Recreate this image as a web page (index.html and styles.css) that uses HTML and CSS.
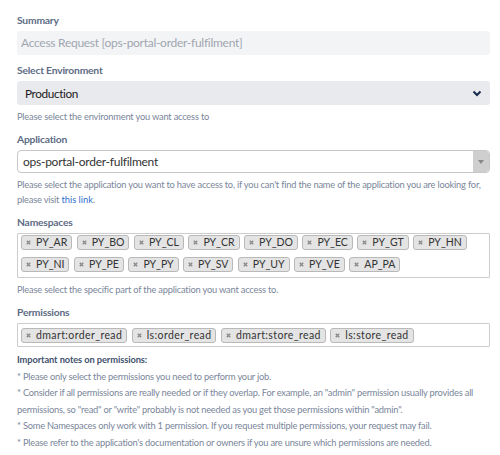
FILE: index.html
```html
<!DOCTYPE html>
<html lang="en">
<head>
<meta charset="utf-8">
<title>Access Request</title>
<link rel="stylesheet" href="styles.css">
</head>
<body>
<form class="form">
  <div class="field">
    <label class="label">Summary</label>
    <div class="input input-disabled">Access Request [ops-portal-order-fulfilment]</div>
  </div>

  <div class="field">
    <label class="label">Select Environment</label>
    <div class="select">
      <span>Production</span>
      <svg class="chevron" width="10" height="7" viewBox="0 0 10 7"><path d="M1.5 1.5 L5 5 L8.5 1.5" fill="none" stroke="#172b4d" stroke-width="2"/></svg>
    </div>
    <p class="help">Please select the environment you want access to</p>
  </div>

  <div class="field">
    <label class="label">Application</label>
    <div class="combo">
      <span class="combo-text">ops-portal-order-fulfilment</span>
      <span class="combo-arrow"><svg width="6" height="4" viewBox="0 0 6 4"><path d="M0 0 H6 L3 4 Z" fill="#888"/></svg></span>
    </div>
    <p class="help">Please select the application you want to have access to, if you can't find the name of the application you are looking for, please&nbsp;visit&nbsp;<a href="#" class="link">this link</a>.</p>
  </div>

  <div class="field">
    <label class="label">Namespaces</label>
    <div class="multi multi-namespaces">
      <span class="tag"><svg class="tag-x" viewBox="0 0 5 5"><path d="M0.8 0.8 L4.2 4.2 M4.2 0.8 L0.8 4.2"/></svg>PY_AR</span>
      <span class="tag"><svg class="tag-x" viewBox="0 0 5 5"><path d="M0.8 0.8 L4.2 4.2 M4.2 0.8 L0.8 4.2"/></svg>PY_BO</span>
      <span class="tag"><svg class="tag-x" viewBox="0 0 5 5"><path d="M0.8 0.8 L4.2 4.2 M4.2 0.8 L0.8 4.2"/></svg>PY_CL</span>
      <span class="tag"><svg class="tag-x" viewBox="0 0 5 5"><path d="M0.8 0.8 L4.2 4.2 M4.2 0.8 L0.8 4.2"/></svg>PY_CR</span>
      <span class="tag"><svg class="tag-x" viewBox="0 0 5 5"><path d="M0.8 0.8 L4.2 4.2 M4.2 0.8 L0.8 4.2"/></svg>PY_DO</span>
      <span class="tag"><svg class="tag-x" viewBox="0 0 5 5"><path d="M0.8 0.8 L4.2 4.2 M4.2 0.8 L0.8 4.2"/></svg>PY_EC</span>
      <span class="tag"><svg class="tag-x" viewBox="0 0 5 5"><path d="M0.8 0.8 L4.2 4.2 M4.2 0.8 L0.8 4.2"/></svg>PY_GT</span>
      <span class="tag"><svg class="tag-x" viewBox="0 0 5 5"><path d="M0.8 0.8 L4.2 4.2 M4.2 0.8 L0.8 4.2"/></svg>PY_HN</span>
      <span class="tag"><svg class="tag-x" viewBox="0 0 5 5"><path d="M0.8 0.8 L4.2 4.2 M4.2 0.8 L0.8 4.2"/></svg>PY_NI</span>
      <span class="tag"><svg class="tag-x" viewBox="0 0 5 5"><path d="M0.8 0.8 L4.2 4.2 M4.2 0.8 L0.8 4.2"/></svg>PY_PE</span>
      <span class="tag"><svg class="tag-x" viewBox="0 0 5 5"><path d="M0.8 0.8 L4.2 4.2 M4.2 0.8 L0.8 4.2"/></svg>PY_PY</span>
      <span class="tag"><svg class="tag-x" viewBox="0 0 5 5"><path d="M0.8 0.8 L4.2 4.2 M4.2 0.8 L0.8 4.2"/></svg>PY_SV</span>
      <span class="tag"><svg class="tag-x" viewBox="0 0 5 5"><path d="M0.8 0.8 L4.2 4.2 M4.2 0.8 L0.8 4.2"/></svg>PY_UY</span>
      <span class="tag"><svg class="tag-x" viewBox="0 0 5 5"><path d="M0.8 0.8 L4.2 4.2 M4.2 0.8 L0.8 4.2"/></svg>PY_VE</span>
      <span class="tag"><svg class="tag-x" viewBox="0 0 5 5"><path d="M0.8 0.8 L4.2 4.2 M4.2 0.8 L0.8 4.2"/></svg>AP_PA</span>
    </div>
    <p class="help">Please select the specific part of the application you want access to.</p>
  </div>

  <div class="field">
    <label class="label">Permissions</label>
    <div class="multi multi-permissions">
      <span class="tag"><svg class="tag-x" viewBox="0 0 5 5"><path d="M0.8 0.8 L4.2 4.2 M4.2 0.8 L0.8 4.2"/></svg>dmart:order_read</span>
      <span class="tag"><svg class="tag-x" viewBox="0 0 5 5"><path d="M0.8 0.8 L4.2 4.2 M4.2 0.8 L0.8 4.2"/></svg>ls:order_read</span>
      <span class="tag"><svg class="tag-x" viewBox="0 0 5 5"><path d="M0.8 0.8 L4.2 4.2 M4.2 0.8 L0.8 4.2"/></svg>dmart:store_read</span>
      <span class="tag"><svg class="tag-x" viewBox="0 0 5 5"><path d="M0.8 0.8 L4.2 4.2 M4.2 0.8 L0.8 4.2"/></svg>ls:store_read</span>
    </div>
  </div>

  <div class="notes">
    <p class="notes-title">Important notes on permissions:</p>
    <p>* Please only select the permissions you need to perform your job.</p>
    <p>* Consider if all permissions are really needed or if they overlap. For example, an "admin" permission usually provides all permissions, so "read" or "write" probably is not needed as you get those permissions within "admin".</p>
    <p>* Some Namespaces only work with 1 permission. If you request multiple permissions, your request may fail.</p>
    <p>* Please refer to the application's documentation or owners if you are unsure which permissions are needed.</p>
  </div>
</form>
</body>
</html>
```
FILE: styles.css
```css
html, body {
  margin: 0;
  background: #ffffff;
}

body {
  font-family: "Lato", "Open Sans", sans-serif;
  color: #172b4d;
}

.form {
  padding: 12px 10px 0 17px;
  display: flex;
  flex-direction: column;
}

.field {
  display: flex;
  flex-direction: column;
  margin-bottom: 7px;
}

.label {
  font-size: 10.3px;
  font-weight: 700;
  letter-spacing: -0.2px;
  color: #5e6c84;
  line-height: 16px;
  margin-bottom: 3px;
}

.input {
  height: 24px;
  box-sizing: border-box;
  border-radius: 3px;
  padding: 0 4px;
  font-size: 12px;
  letter-spacing: -0.28px;
  line-height: 24px;
}

.input-disabled {
  background: #f3f4f6;
  color: #a0a6b0;
}

.select {
  height: 24px;
  box-sizing: border-box;
  border-radius: 3px;
  background: #e9eaed;
  display: flex;
  align-items: center;
  justify-content: space-between;
  padding: 0 8px 0 8px;
  font-size: 11.8px;
  letter-spacing: -0.4px;
  color: #1c1c1c;
}

.chevron {
  display: block;
}

.help {
  margin: 4px 0 0;
  font-size: 9.3px;
  letter-spacing: -0.2px;
  line-height: 15px;
  color: #7a869a;
}

.link {
  color: #2f6fd0;
  text-decoration: none;
  letter-spacing: 0;
}

.combo {
  height: 23px;
  box-sizing: border-box;
  border: 1px solid #c7c7c7;
  border-radius: 4px;
  display: flex;
  align-items: stretch;
  background: #fff;
}

.combo-text {
  flex: 1;
  padding-left: 5px;
  font-size: 12px;
  letter-spacing: -0.26px;
  line-height: 21px;
  color: #333;
}

.combo-arrow {
  width: 16px;
  background: #cfcfcf;
  border-radius: 0 3px 3px 0;
  display: flex;
  align-items: center;
  justify-content: center;
}

.multi {
  border: 1px solid #cccccc;
  border-radius: 1px;
  display: flex;
  flex-wrap: wrap;
  gap: 7px 4.5px;
}

.multi-namespaces {
  padding: 1px 3px 5px;
}

.multi-permissions {
  padding: 4px 3px 3px;
}

.multi-permissions .tag {
  letter-spacing: 0.4px;
}

.tag {
  display: inline-flex;
  align-items: center;
  height: 15px;
  box-sizing: border-box;
  border: 1px solid #b9b9b9;
  border-radius: 3px;
  background: #e4e4e4;
  padding: 0 4px 0 4px;
  font-size: 10.5px;
  color: #333;
  line-height: 13px;
}

.tag-x {
  width: 5px;
  height: 5px;
  margin-right: 5px;
  flex: none;
  fill: none;
  stroke: #8c8c8c;
  stroke-width: 1.5;
}

.notes {
  margin-top: -2px;
  font-size: 9.3px;
  letter-spacing: -0.22px;
  line-height: 16.6px;
  color: #7a869a;
}

.notes p {
  margin: 0;
}

.notes .notes-title {
  font-weight: 700;
  letter-spacing: -0.1px;
  color: #42526e;
}
```
